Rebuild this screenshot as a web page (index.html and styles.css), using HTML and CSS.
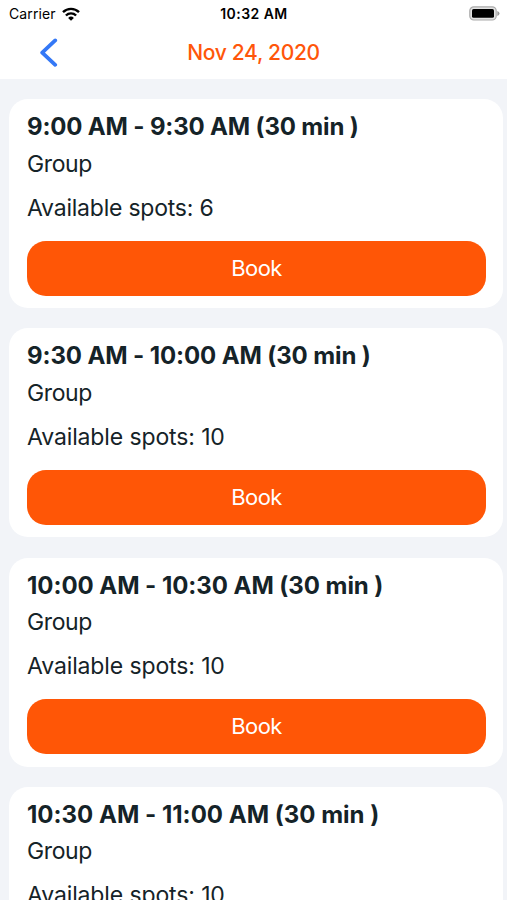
FILE: index.html
```html
<!DOCTYPE html>
<html lang="en">
<head>
<meta charset="utf-8">
<title>Nov 24, 2020</title>
<link rel="stylesheet" href="styles.css">
</head>
<body>
<header class="top">
  <div class="status">
    <div class="carrier"><span>Carrier</span>
      <svg class="wifi" width="18" height="14" viewBox="0 0 18 14"><path d="M9 13.8 6.1 10.9a4.1 4.1 0 0 1 5.8 0z" fill="#000"/><path d="M3.9 8.5a7.2 7.2 0 0 1 10.2 0M1 5.2a11.4 11.4 0 0 1 16 0" fill="none" stroke="#000" stroke-width="2.4"/></svg>
    </div>
    <div class="clock">10:32 AM</div>
    <svg class="battery" width="31" height="15" viewBox="0 0 31 15"><rect x=".8" y=".8" width="26.4" height="13.2" rx="4" fill="#e2e2e2" stroke="#aaa" stroke-width="1.2"/><rect x="3" y="3" width="22" height="8.8" rx="1.6"/><path d="M28.3 5v5q2.2-.7 2.2-2.5T28.3 5z" fill="#999"/></svg>
  </div>
  <nav class="nav">
    <svg class="back" width="20" height="30" viewBox="0 0 20 30"><path d="M15.2 2.4 2.2 14.6l13 12.2" fill="none" stroke="#3478f6" stroke-width="3.8" stroke-linecap="round" stroke-linejoin="round"/></svg>
    <h1 class="title">Nov 24, 2020</h1>
  </nav>
</header>
<main class="slots">
  <section class="card"><h2 class="time">9:00 AM - 9:30 AM (30 min )</h2><p class="kind">Group</p><p class="spots">Available spots: 6</p><button class="book">Book</button></section>
  <section class="card"><h2 class="time">9:30 AM - 10:00 AM (30 min )</h2><p class="kind">Group</p><p class="spots">Available spots: 10</p><button class="book">Book</button></section>
  <section class="card"><h2 class="time">10:00 AM - 10:30 AM (30 min )</h2><p class="kind">Group</p><p class="spots">Available spots: 10</p><button class="book">Book</button></section>
  <section class="card"><h2 class="time">10:30 AM - 11:00 AM (30 min )</h2><p class="kind">Group</p><p class="spots">Available spots: 10</p><button class="book">Book</button></section>
</main>
</body>
</html>
```
FILE: styles.css
```css
* { box-sizing: border-box; }
html, body { height: 900px; overflow: hidden; }
body { margin: 0; background: #f2f4f8; color: #152328; font-family: Inter, sans-serif; }
h1, h2, p { margin: 0; }
.top { height: 79px; background: #fff; }
.status { height: 27px; display: grid; grid-template-columns: 1fr auto 1fr; align-items: center; padding: 0 7px 0 9px; color: #000; }
.carrier { display: flex; align-items: center; gap: 6px; font-size: 14px; letter-spacing: 0.1px; }
.clock { margin-left: -1px; font-size: 14px; font-weight: 600; letter-spacing: 0.45px; }
.battery { justify-self: end; }
.nav { height: 52px; display: grid; grid-template-columns: 60px 1fr 60px; align-items: center; }
.back { justify-self: end; }
.title { text-align: center; color: #ff560a; font-size: 21px; line-height: 26px; font-weight: 550; letter-spacing: -0.3px; }
.slots { padding: 20px 4px 0 8.5px; display: flex; flex-direction: column; gap: 20.3px; }
.card { height: 209px; flex: none; background: #fff; border-radius: 19px; padding: 12px 17px 0 18.5px; }
.time { font-size: 24px; line-height: 31px; font-weight: 670; letter-spacing: -0.16px; white-space: nowrap; }
.card:nth-child(2) .time { letter-spacing: -0.11px; }
.card:nth-child(3) .time { letter-spacing: -0.05px; }
.card:nth-child(4) .time { letter-spacing: 0.01px; }
.kind, .spots { font-size: 23px; line-height: 30px; letter-spacing: -0.12px; }
.kind { margin-top: 6.5px; letter-spacing: -0.4px; }
.spots { margin-top: 14px; }
.card:first-child .spots { letter-spacing: -0.22px; }
.book { display: block; width: 100%; height: 55px; margin-top: 18.2px; padding: 0 0 1px; border: 0; border-radius: 19px; background: #ff5606; color: #fff; font: 400 22px Inter, sans-serif; letter-spacing: -0.6px; }
```
